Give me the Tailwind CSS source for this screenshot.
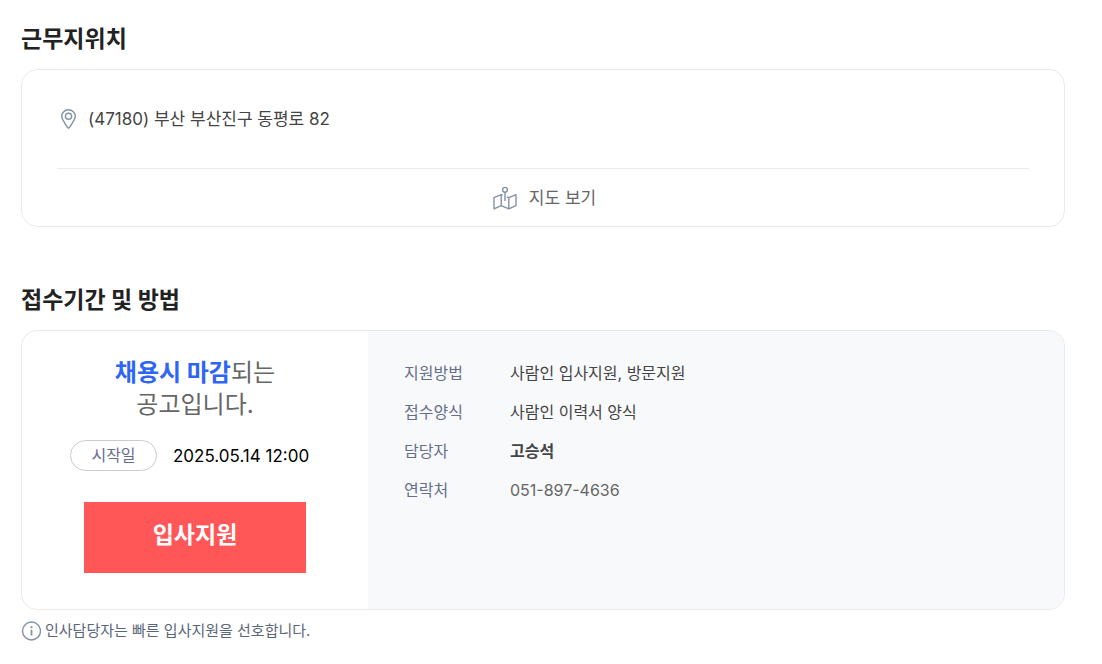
<!DOCTYPE html>
<html lang="ko">
<head>
  <meta charset="UTF-8" />
  <meta name="viewport" content="width=device-width, initial-scale=1.0" />
  <title>채용정보</title>
  <script src="https://cdn.jsdelivr.net/npm/@tailwindcss/browser@4"></script>
</head>
<body class="bg-white font-['Inter','Noto_Sans_CJK_KR',sans-serif] text-[#444]">
  <main class="pl-[21px] pr-[37px] py-[21px]">

    <!-- 근무지위치 -->
    <section>
      <h2 class="text-[23px] leading-9 font-bold text-[#222]">근무지위치</h2>
      <div class="mt-3 border border-[#eaeaea] rounded-2xl px-[35px]">
        <address class="flex items-center gap-3 h-[98px] pl-1 not-italic text-[17px] leading-6">
          <svg class="w-[15px] h-5" viewBox="0 0 15 20" fill="none" stroke="#8491a7" stroke-width="1.4">
            <path d="M7.5 19.2C6.8 19.2 6.3 18.3 5.7 17.3L2 11.2C1.2 9.8.7 8.9.7 7.3A6.8 6.6 0 0 1 14.3 7.3C14.3 8.9 13.8 9.8 13 11.2L9.3 17.3C8.7 18.3 8.2 19.2 7.5 19.2Z" />
            <circle cx="7.5" cy="7.3" r="3.1" />
          </svg>
          (47180) 부산 부산진구 동평로 82
        </address>
        <button type="button" class="flex items-center justify-center gap-3 w-full h-[58px] pl-[3px] border-t border-[#eaeaea] text-[17px] leading-6 text-[#666]">
          <svg class="w-6 h-6" viewBox="0 0 24 24" fill="none" stroke="#8491a7" stroke-width="1.4" stroke-linejoin="round">
            <path d="M9.7 9.2 8.2 8.6 1 11.7V22.8L8.2 19.7 15.8 22.8 23 19.7V8.6L15.8 11.7 13.8 10.9M8.2 8.6V19.7M15.8 11.7V22.8" />
            <circle cx="12" cy="3.8" r="2.4" />
            <path d="M12 6.4V15" />
          </svg>
          지도 보기
        </button>
      </div>
    </section>

    <!-- 접수기간 및 방법 -->
    <section class="mt-[55px]">
      <h2 class="text-[23px] leading-9 font-bold text-[#222]">접수기간 및 방법</h2>
      <div class="flex mt-3 border border-[#eaeaea] rounded-2xl overflow-hidden">
        <div class="w-[346px] shrink-0 pt-[26px] pb-9 flex flex-col items-center">
          <p class="text-center text-2xl leading-8 text-[#666]"><strong class="font-bold text-[#2f65f5]">채용시 마감</strong>되는<br />공고입니다.</p>
          <dl class="flex items-center gap-4 w-[250px] mt-[19px]">
            <dt class="w-[87px] h-[31px] border border-[#ccc] rounded-full text-center text-base leading-7 text-[#666e8b]">시작일</dt>
            <dd class="text-[17px] leading-7 text-black">2025.05.14 12:00</dd>
          </dl>
          <button type="button" class="mt-[31px] w-[222px] h-[71px] pb-1 bg-[#ff5757] text-[23px] font-bold text-white">입사지원</button>
        </div>
        <dl class="flex-1 grid grid-cols-[106px_1fr] content-start gap-y-[15px] pt-[30px] px-9 bg-[#f8f9fb] text-base leading-6">
          <dt class="text-[#666e8b]">지원방법</dt>
          <dd>사람인 입사지원, 방문지원</dd>
          <dt class="text-[#666e8b]">접수양식</dt>
          <dd>사람인 이력서 양식</dd>
          <dt class="text-[#666e8b]">담당자</dt>
          <dd class="font-bold">고승석</dd>
          <dt class="text-[#666e8b]">연락처</dt>
          <dd class="text-[#666]">051-897-4636</dd>
        </dl>
      </div>
      <p class="flex items-center gap-1 mt-[9px] text-[15px] leading-6 text-[#5c667b]">
        <svg class="w-5 h-5" viewBox="0 0 20 20" fill="none" stroke="#8491a7" stroke-width="1.4">
          <circle cx="10.5" cy="10" r="9" />
          <path d="M10.5 8.7V14.5" stroke-width="1.8" />
          <circle cx="10.5" cy="6.2" r="1.1" fill="#8491a7" stroke="none" />
        </svg>
        인사담당자는 빠른 입사지원을 선호합니다.
      </p>
    </section>
  </main>
</body>
</html>
